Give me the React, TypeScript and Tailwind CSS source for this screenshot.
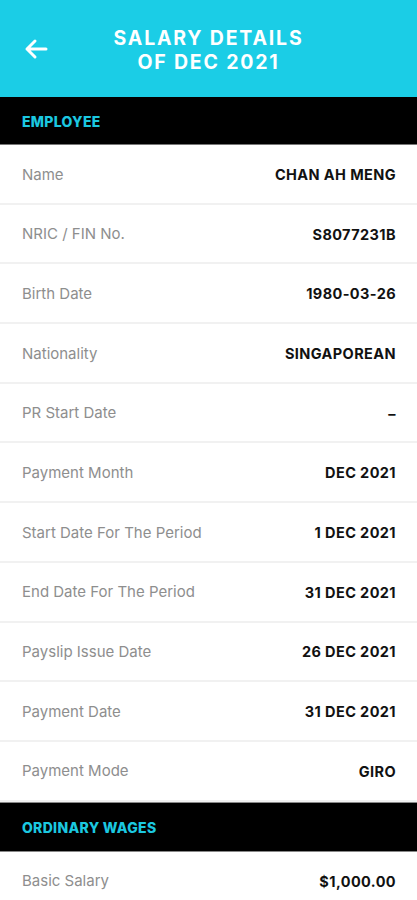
import React from "react";

const rows: [string, string][] = [
  ["Name", "CHAN AH MENG"],
  ["NRIC / FIN No.", "S8077231B"],
  ["Birth Date", "1980-03-26"],
  ["Nationality", "SINGAPOREAN"],
  ["PR Start Date", "–"],
  ["Payment Month", "DEC 2021"],
  ["Start Date For The Period", "1 DEC 2021"],
  ["End Date For The Period", "31 DEC 2021"],
  ["Payslip Issue Date", "26 DEC 2021"],
  ["Payment Date", "31 DEC 2021"],
  ["Payment Mode", "GIRO"],
];

function Row({ label, value }: { label: string; value: string }) {
  return (
    <div className="flex h-[59.7px] items-center justify-between border-b-2 border-[#f1f1f1] bg-white pl-[22px] pr-[21px] pt-[2px]">
      <span className="text-[15px] text-[#8e8e8e]">{label}</span>
      <span className="text-[14.5px] font-bold tracking-[0.4px] text-[#111]">{value}</span>
    </div>
  );
}

export default function App() {
  return (
    <div className="h-[900px] w-[417px] overflow-hidden bg-white" style={{ fontFamily: "Inter, 'Noto Sans', sans-serif" }}>
      <div className="relative flex h-[97px] items-center justify-center bg-[#1bcde6] pt-[2px]">
        <svg className="absolute left-[24px] top-[38px]" width="24" height="22" viewBox="0 0 24 22" fill="none" stroke="white" strokeWidth="3" strokeLinecap="round" strokeLinejoin="round">
          <path d="M22 11H3M11 3L3 11L11 19" />
        </svg>
        <div className="text-center text-[19.5px] font-bold leading-[24px] tracking-[1.8px] text-white">
          SALARY DETAILS
          <br />
          OF DEC 2021
        </div>
      </div>
      <div className="flex h-[48px] items-center border-b border-[#777] bg-black px-[22px] pt-[1px]">
        <span className="text-[14px] font-extrabold tracking-[0.3px] text-[#1bc8e0]">EMPLOYEE</span>
      </div>
      {rows.map(([l, v]) => (
        <Row key={l} label={l} value={v} />
      ))}
      <div className="flex h-[50px] items-center border-y border-[#888] bg-black px-[22px] pt-[2px]">
        <span className="text-[14px] font-extrabold tracking-[0.3px] text-[#1bc8e0]">ORDINARY WAGES</span>
      </div>
      <Row label="Basic Salary" value="$1,000.00" />
    </div>
  );
}
